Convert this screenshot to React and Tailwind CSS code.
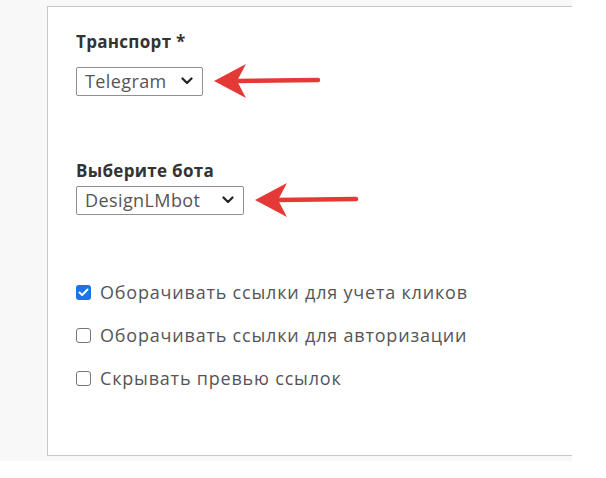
const font = { fontFamily: '"Open Sans", "Liberation Sans", sans-serif' };

function Arrow({ width }) {
  return (
    <svg width={width} height="36" viewBox={`0 0 ${width} 36`} className="block">
      <line x1="22" y1="18" x2={width - 3} y2="17" stroke="#e53935" strokeWidth="4.5" strokeLinecap="round" />
      <path d="M0 18 L32 1 L23 18 L32 35 Z" fill="#e53935" />
    </svg>
  );
}

function Select({ value, width }) {
  return (
    <div
      className="flex items-center justify-between h-[29px] border border-[#8f8f8f] rounded-[2px] bg-white pl-[8px] pr-[9px] text-[18px] tracking-[0.4px] text-[#555]"
      style={{ width }}
    >
      <span>{value}</span>
      <svg width="12" height="8" viewBox="0 0 12 8">
        <path d="M1.5 1.5 L6 6 L10.5 1.5" fill="none" stroke="#222" strokeWidth="2.2" strokeLinecap="round" strokeLinejoin="round" />
      </svg>
    </div>
  );
}

function Check({ checked, label }) {
  return (
    <label className="flex items-center gap-[9px] h-[43px] text-[18px] tracking-[0.8px] text-[#555]">
      {checked ? (
        <span className="w-[15px] h-[15px] rounded-[3px] bg-[#1a73e8] flex items-center justify-center">
          <svg width="11" height="9" viewBox="0 0 11 9">
            <path d="M1.5 4.5 L4.2 7 L9.5 1.5" fill="none" stroke="#fff" strokeWidth="2" strokeLinecap="round" strokeLinejoin="round" />
          </svg>
        </span>
      ) : (
        <span className="w-[15px] h-[15px] rounded-[3px] border-[1.5px] border-[#767676] bg-white" />
      )}
      <span>{label}</span>
    </label>
  );
}

export default function App() {
  return (
    <div className="w-[606px] h-[478px] bg-white" style={font}>
      <div className="w-[572px] h-[461px] bg-[#f8f8f8] pt-[6px] pl-[47px]">
        <div className="h-[450px] bg-white border-l border-t border-b border-[#c8c8c8] pl-[28px] pt-[24px]">
          <div className="text-[17px] font-bold tracking-[0.3px] text-[#333] leading-[22px]">Транспорт *</div>
          <div className="flex items-center gap-[11px] mt-[10px]">
            <Select value="Telegram" width={127} />
            <Arrow width={107} />
          </div>

          <div className="text-[17px] font-bold tracking-[0.3px] text-[#333] leading-[22px] mt-[61px]">Выберите бота</div>
          <div className="flex items-center gap-[11px] mt-[0px]">
            <Select value="DesignLMbot" width={168} />
            <Arrow width={104} />
          </div>

          <div className="mt-[53px]">
            <Check checked label="Оборачивать ссылки для учета кликов" />
            <Check label="Оборачивать ссылки для авторизации" />
            <Check label="Скрывать превью ссылок" />
          </div>
        </div>
      </div>
    </div>
  );
}
